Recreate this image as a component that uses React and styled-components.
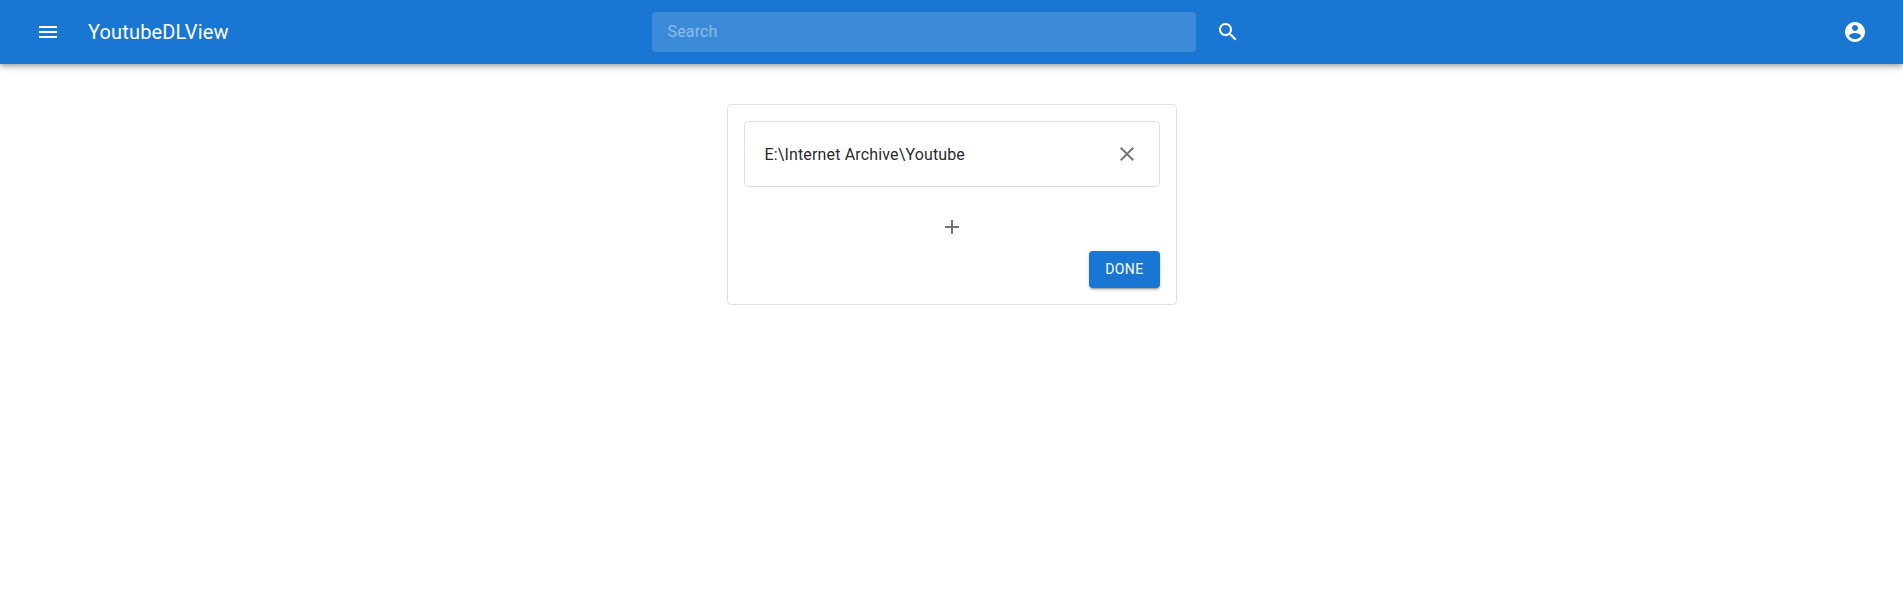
import React from "react";
import styled, { createGlobalStyle } from "styled-components";

const Global = createGlobalStyle`
  *, *::before, *::after { box-sizing: border-box; }
  body {
    margin: 0;
    background: #fff;
    color: rgba(0, 0, 0, 0.87);
    font: 400 16px/1.5 Roboto, "Liberation Sans", sans-serif;
    letter-spacing: 0.00938em;
  }
`;

const AppBar = styled.header`
  display: grid;
  grid-template-columns: 1fr 600px 1fr;
  align-items: center;
  height: 64px;
  padding: 0 24px;
  background: #1976d2;
  color: #fff;
  box-shadow: 0 2px 4px -1px rgba(0, 0, 0, 0.2), 0 4px 5px rgba(0, 0, 0, 0.14),
    0 1px 10px rgba(0, 0, 0, 0.12);
`;

const Group = styled.div`
  display: flex;
  align-items: center;
  justify-content: ${(p) => (p.$end ? "flex-end" : "flex-start")};
`;

const SearchForm = styled.form`
  display: flex;
  align-items: center;
  gap: 8px;
`;

const Title = styled.h1`
  margin: 0 0 0 16px;
  font-size: 20px;
  font-weight: 400;
  line-height: 1.6;
  letter-spacing: 0.0075em;
`;

const IconButton = styled.button`
  display: inline-flex;
  padding: ${(p) => p.$pad ?? 12}px;
  border: 0;
  border-radius: 50%;
  background: transparent;
  color: ${(p) => (p.$muted ? "rgba(0, 0, 0, 0.54)" : "inherit")};
  cursor: pointer;
`;

const Svg = styled.svg`
  display: block;
  width: 24px;
  height: 24px;
  fill: currentColor;
`;

const SearchInput = styled.input`
  flex: 0 0 544px;
  width: 544px;
  height: 40px;
  padding: 0 16px 1px;
  border: 0;
  border-radius: 4px;
  outline: 0;
  background: rgba(255, 255, 255, 0.15);
  color: inherit;
  font: inherit;
  letter-spacing: inherit;
  &::placeholder { color: #fff; opacity: 0.42; }
`;

const Main = styled.main`
  display: flex;
  justify-content: center;
  padding-top: 40px;
`;

const Paper = styled.section`
  display: flex;
  flex-direction: column;
  width: 450px;
  padding: 16px;
  border: 1px solid rgba(0, 0, 0, 0.12);
  border-radius: 4px;
`;

const PathRow = styled.div`
  display: flex;
  align-items: center;
  justify-content: space-between;
  height: 66px;
  padding: 0 12px 0 20px;
  border: 1px solid rgba(0, 0, 0, 0.12);
  border-radius: 4px;
`;

const PathText = styled.span`
  padding-top: 1px;
`;

const AddRow = styled.div`
  display: flex;
  justify-content: center;
  padding-top: 20px;
`;

const DoneButton = styled.button`
  align-self: flex-end;
  margin-top: 4px;
  padding: 6px 16px;
  border: 0;
  border-radius: 4px;
  background: #1976d2;
  color: #fff;
  font: 400 14px/25px Roboto, "Liberation Sans", sans-serif;
  letter-spacing: 0.02857em;
  text-transform: uppercase;
  cursor: pointer;
  box-shadow: 0 3px 1px -2px rgba(0, 0, 0, 0.2), 0 2px 2px rgba(0, 0, 0, 0.14),
    0 1px 5px rgba(0, 0, 0, 0.12);
`;

const paths = {
  menu: "M3 18h18v-2H3v2zm0-5h18v-2H3v2zm0-7v2h18V6H3z",
  search:
    "M15.5 14h-.79l-.28-.27C15.41 12.59 16 11.11 16 9.5 16 5.91 13.09 3 9.5 3S3 5.91 3 9.5 5.91 16 9.5 16c1.61 0 3.09-.59 4.23-1.57l.27.28v.79l5 4.99L20.49 19l-4.99-5zm-6 0C7.01 14 5 11.99 5 9.5S7.01 5 9.5 5 14 7.01 14 9.5 11.99 14 9.5 14z",
  account:
    "M12 2C6.48 2 2 6.48 2 12s4.48 10 10 10 10-4.48 10-10S17.52 2 12 2zm0 3c1.66 0 3 1.34 3 3s-1.34 3-3 3-3-1.34-3-3 1.34-3 3-3zm0 14.2c-2.5 0-4.71-1.28-6-3.22.03-1.99 4-3.08 6-3.08 1.99 0 5.97 1.09 6 3.08-1.29 1.94-3.5 3.22-6 3.22z",
  close:
    "M19 6.41L17.59 5 12 10.59 6.41 5 5 6.41 10.59 12 5 17.59 6.41 19 12 13.41 17.59 19 19 17.59 13.41 12z",
  add: "M19 13h-6v6h-2v-6H5v-2h6V5h2v6h6v2z",
};

const Icon = ({ name }) => (
  <Svg viewBox="0 0 24 24" aria-hidden="true">
    <path d={paths[name]} />
  </Svg>
);

export default function App() {
  return (
    <>
      <Global />
      <AppBar>
        <Group>
          <IconButton aria-label="Menu"><Icon name="menu" /></IconButton>
          <Title>YoutubeDLView</Title>
        </Group>
        <SearchForm onSubmit={(e) => e.preventDefault()}>
          <SearchInput placeholder="Search" aria-label="Search" />
          <IconButton aria-label="Submit search"><Icon name="search" /></IconButton>
        </SearchForm>
        <Group $end>
          <IconButton aria-label="Account"><Icon name="account" /></IconButton>
        </Group>
      </AppBar>
      <Main>
        <Paper>
          <PathRow>
            <PathText>E:\Internet Archive\Youtube</PathText>
            <IconButton $muted $pad={8} aria-label="Remove"><Icon name="close" /></IconButton>
          </PathRow>
          <AddRow>
            <IconButton $muted $pad={8} aria-label="Add"><Icon name="add" /></IconButton>
          </AddRow>
          <DoneButton>Done</DoneButton>
        </Paper>
      </Main>
    </>
  );
}
